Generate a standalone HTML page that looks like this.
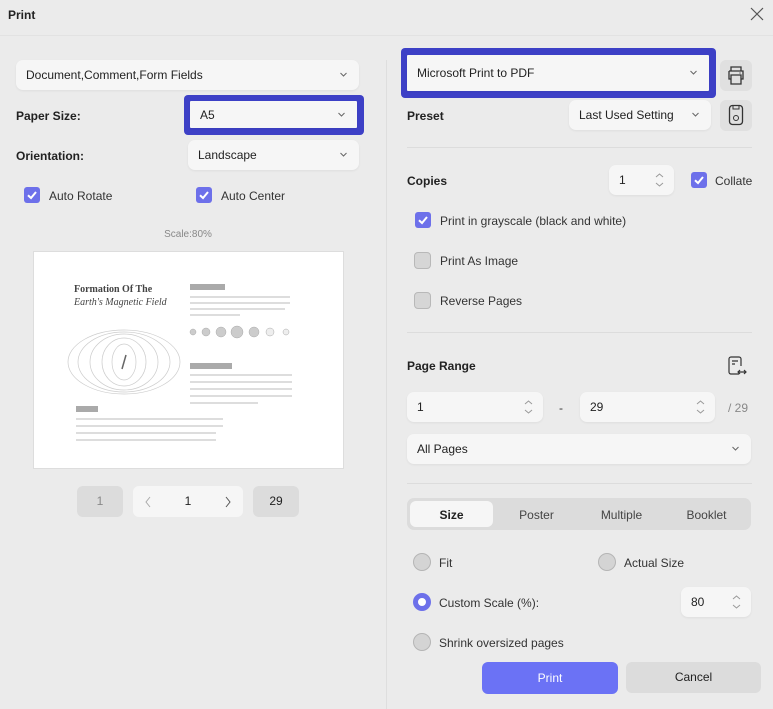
<!DOCTYPE html>
<html><head><meta charset="utf-8"><style>
*{box-sizing:border-box;margin:0;padding:0}
body{width:773px;height:709px;background:#ebebeb;font-family:"Liberation Sans",sans-serif;font-size:12px;color:#222;position:relative;overflow:hidden}
.a{position:absolute}
.f{position:absolute;background:#f6f6f6;border-radius:7px;box-shadow:0 1px 2px rgba(0,0,0,.06);display:flex;align-items:center;padding-left:10px;font-size:12px;color:#222}
.chev{position:absolute;right:12px;top:50%;margin-top:-4px;width:7px;height:7px}
.lbl{position:absolute;font-weight:bold;font-size:12px;color:#222}
.cb{position:absolute;width:16px;height:16px;border-radius:3px;background:#6d70ea}
.cbo{position:absolute;width:17px;height:17px;border-radius:4px;background:#d6d6d6;border:1px solid #b8b8b8}
.t{position:absolute;font-size:12px;color:#333}
.rd{position:absolute;width:18px;height:18px;border-radius:50%;background:#d4d4d4;border:1px solid #b5b5b5}
.hr{position:absolute;height:1px;background:#dcdcdc}
.ln{position:absolute;height:2px;background:#ddd}
.sp{position:absolute;right:10px;top:50%;margin-top:-8px;width:9px;height:16px}
</style></head><body>
<div class="a" style="left:8px;top:8px;font-weight:bold;font-size:12px">Print</div>
<svg class="a" style="left:750px;top:7px" width="14" height="14"><path d="M1 1L13 13M13 1L1 13" stroke="#555" stroke-width="1.2"/></svg>
<div class="hr" style="left:0;top:35px;width:773px;background:#e2e2e2"></div>
<div class="a" style="left:386px;top:60px;width:1px;height:649px;background:#dedede"></div>

<svg width="0" height="0" style="position:absolute"><defs><symbol id="ch" viewBox="0 0 7 7"><path d="M0.5 2L3.5 5L6.5 2" stroke="#666" fill="none" stroke-width="1"/></symbol><symbol id="ck" viewBox="0 0 16 16"><path d="M4 8.3L7 11L12 5" stroke="#fff" fill="none" stroke-width="2"/></symbol><symbol id="spn" viewBox="0 0 9 16"><path d="M1 5L4.5 2L8 5M1 11L4.5 14L8 11" stroke="#999" fill="none" stroke-width="1"/></symbol></defs></svg>

<div class="f" style="left:16px;top:60px;width:343px;height:30px">Document,Comment,Form Fields<svg class="chev"><use href="#ch"/></svg></div>
<div class="lbl" style="left:16px;top:109px">Paper Size:</div>
<div class="a" style="left:184px;top:95px;width:180px;height:40px;background:#3d40c6;border-radius:4px"></div>
<div class="f" style="left:190px;top:101px;width:167px;height:27px;border-radius:1px">A5<svg class="chev"><use href="#ch"/></svg></div>
<div class="lbl" style="left:16px;top:149px">Orientation:</div>
<div class="f" style="left:188px;top:140px;width:171px;height:30px">Landscape<svg class="chev"><use href="#ch"/></svg></div>
<div class="cb" style="left:24px;top:187px"><svg width="16" height="16"><use href="#ck"/></svg></div>
<div class="t" style="left:49px;top:189px">Auto Rotate</div>
<div class="cb" style="left:196px;top:187px"><svg width="16" height="16"><use href="#ck"/></svg></div>
<div class="t" style="left:221px;top:189px">Auto Center</div>
<div class="a" style="left:0;top:229px;width:376px;text-align:center;font-size:10px;color:#888">Scale:80%</div>

<div class="a" style="left:33px;top:251px;width:311px;height:218px;background:#fff;border:1px solid #ddd">
<div class="a" style="left:40px;top:32px;font-family:'Liberation Serif',serif;font-weight:bold;font-size:10px;color:#444">Formation Of The</div>
<div class="a" style="left:40px;top:45px;font-family:'Liberation Serif',serif;font-style:italic;font-size:10px;color:#444">Earth's Magnetic Field</div>
<svg class="a" style="left:30px;top:65px" width="120" height="100"><g fill="none" stroke="#ccc" stroke-width=".7"><ellipse cx="60" cy="45" rx="12" ry="18"/><ellipse cx="60" cy="45" rx="22" ry="24"/><ellipse cx="60" cy="45" rx="34" ry="28"/><ellipse cx="60" cy="45" rx="46" ry="30"/><ellipse cx="60" cy="45" rx="56" ry="32"/></g><path d="M58 52L62 38" stroke="#666" stroke-width="1.5"/></svg>
<div class="a" style="left:156px;top:32px;width:35px;height:6px;background:#aaa"></div>
<div class="ln" style="left:156px;top:44px;width:100px"></div><div class="ln" style="left:156px;top:50px;width:100px"></div><div class="ln" style="left:156px;top:56px;width:95px"></div><div class="ln" style="left:156px;top:62px;width:50px"></div>
<svg class="a" style="left:152px;top:70px" width="110" height="30"><g fill="#ccc" stroke="#aaa" stroke-width=".5"><circle cx="7" cy="10" r="3"/><circle cx="20" cy="10" r="4"/><circle cx="35" cy="10" r="5"/><circle cx="51" cy="10" r="6"/><circle cx="68" cy="10" r="5"/><circle cx="84" cy="10" r="4" fill="#eee"/><circle cx="100" cy="10" r="3" fill="#eee"/></g></svg>
<div class="a" style="left:156px;top:111px;width:42px;height:6px;background:#aaa"></div>
<div class="ln" style="left:156px;top:122px;width:102px"></div><div class="ln" style="left:156px;top:129px;width:102px"></div><div class="ln" style="left:156px;top:136px;width:102px"></div><div class="ln" style="left:156px;top:143px;width:102px"></div><div class="ln" style="left:156px;top:150px;width:68px"></div>
<div class="a" style="left:42px;top:154px;width:22px;height:6px;background:#aaa"></div>
<div class="ln" style="left:42px;top:166px;width:147px"></div><div class="ln" style="left:42px;top:173px;width:147px"></div><div class="ln" style="left:42px;top:180px;width:140px"></div><div class="ln" style="left:42px;top:187px;width:140px"></div>
</div>

<div class="a" style="left:77px;top:486px;width:46px;height:31px;background:#dcdcdc;border-radius:6px;text-align:center;line-height:31px;color:#888">1</div>
<div class="a" style="left:133px;top:486px;width:110px;height:31px;background:#f6f6f6;border-radius:6px;text-align:center;line-height:31px;color:#222">1</div>
<svg class="a" style="left:143px;top:495px" width="10" height="14"><path d="M7 2L3 7L7 12" stroke="#aaa" fill="none"/></svg>
<svg class="a" style="left:223px;top:495px" width="10" height="14"><path d="M3 2L7 7L3 12" stroke="#555" fill="none"/></svg>
<div class="a" style="left:253px;top:486px;width:46px;height:31px;background:#dcdcdc;border-radius:6px;text-align:center;line-height:31px;color:#222">29</div>

<div class="a" style="left:401px;top:48px;width:315px;height:50px;background:#3d40c6;border-radius:4px"></div>
<div class="f" style="left:407px;top:55px;width:302px;height:36px;border-radius:1px">Microsoft Print to PDF<svg class="chev"><use href="#ch"/></svg></div>
<div class="a" style="left:720px;top:60px;width:32px;height:31px;background:#e0e0e0;border-radius:6px"></div>
<svg class="a" style="left:726px;top:64px" width="20" height="22"><path d="M5 7V3h10v4M3 7h14v8h-2M5 15H3V7M5 11h10v9H5z" stroke="#333" fill="none" stroke-width="1.3"/><circle cx="14" cy="9" r=".6" fill="#333"/></svg>
<div class="lbl" style="left:407px;top:109px">Preset</div>
<div class="f" style="left:569px;top:100px;width:142px;height:30px">Last Used Setting<svg class="chev"><use href="#ch"/></svg></div>
<div class="a" style="left:720px;top:100px;width:32px;height:31px;background:#e0e0e0;border-radius:6px"></div>
<svg class="a" style="left:728px;top:104px" width="16" height="22"><rect x="1.5" y="1.5" width="13" height="19" rx="3" stroke="#333" fill="none" stroke-width="1.3"/><path d="M5 2v3h6V2" stroke="#333" fill="none"/><circle cx="8" cy="14" r="2.5" stroke="#333" fill="none"/></svg>
<div class="hr" style="left:407px;top:147px;width:345px"></div>

<div class="lbl" style="left:407px;top:174px">Copies</div>
<div class="f" style="left:609px;top:165px;width:65px;height:30px">1<svg class="sp"><use href="#spn"/></svg></div>
<div class="cb" style="left:691px;top:172px"><svg width="16" height="16"><use href="#ck"/></svg></div>
<div class="t" style="left:715px;top:174px">Collate</div>
<div class="cb" style="left:415px;top:212px"><svg width="16" height="16"><use href="#ck"/></svg></div>
<div class="t" style="left:440px;top:214px">Print in grayscale (black and white)</div>
<div class="cbo" style="left:414px;top:252px"></div>
<div class="t" style="left:440px;top:254px">Print As Image</div>
<div class="cbo" style="left:414px;top:292px"></div>
<div class="t" style="left:440px;top:294px">Reverse Pages</div>
<div class="hr" style="left:407px;top:332px;width:345px"></div>

<div class="lbl" style="left:407px;top:359px">Page Range</div>
<svg class="a" style="left:727px;top:355px" width="20" height="22"><path d="M12 19H4a2 2 0 0 1-2-2V4a2 2 0 0 1 2-2h8a2 2 0 0 1 2 2v7M5 6h6M5 9h3M11 17h8M13 15l-2 2l2 2M17 15l2 2l-2 2" stroke="#333" fill="none" stroke-width="1.2"/></svg>
<div class="f" style="left:407px;top:392px;width:136px;height:30px">1<svg class="sp"><use href="#spn"/></svg></div>
<div class="t" style="left:559px;top:401px">-</div>
<div class="f" style="left:580px;top:392px;width:135px;height:30px">29<svg class="sp"><use href="#spn"/></svg></div>
<div class="t" style="left:728px;top:401px;color:#888">/ 29</div>
<div class="f" style="left:407px;top:434px;width:344px;height:30px">All Pages<svg class="chev"><use href="#ch"/></svg></div>
<div class="hr" style="left:407px;top:483px;width:345px"></div>

<div class="a" style="left:407px;top:498px;width:344px;height:32px;background:#dcdcdc;border-radius:7px"></div>
<div class="a" style="left:410px;top:501px;width:83px;height:26px;background:#f6f6f6;border-radius:6px"></div>
<div class="a" style="left:410px;top:508px;width:83px;text-align:center;font-weight:bold">Size</div>
<div class="a" style="left:495px;top:508px;width:83px;text-align:center;color:#444">Poster</div>
<div class="a" style="left:580px;top:508px;width:83px;text-align:center;color:#444">Multiple</div>
<div class="a" style="left:665px;top:508px;width:83px;text-align:center;color:#444">Booklet</div>

<div class="rd" style="left:413px;top:553px"></div><div class="t" style="left:439px;top:556px">Fit</div>
<div class="rd" style="left:598px;top:553px"></div><div class="t" style="left:624px;top:556px">Actual Size</div>
<div class="a" style="left:413px;top:593px;width:18px;height:18px;border-radius:50%;border:5px solid #6d70ea;background:#fff"></div>
<div class="t" style="left:439px;top:596px">Custom Scale (%):</div>
<div class="f" style="left:681px;top:587px;width:70px;height:30px">80<svg class="sp"><use href="#spn"/></svg></div>
<div class="rd" style="left:413px;top:633px"></div><div class="t" style="left:439px;top:636px">Shrink oversized pages</div>

<div class="a" style="left:482px;top:662px;width:136px;height:32px;background:#6b72f5;border-radius:6px;color:#fff;text-align:center;line-height:32px">Print</div>
<div class="a" style="left:626px;top:662px;width:135px;height:31px;background:#dcdcdc;border-radius:6px;color:#222;text-align:center;line-height:31px">Cancel</div>
</body></html>
